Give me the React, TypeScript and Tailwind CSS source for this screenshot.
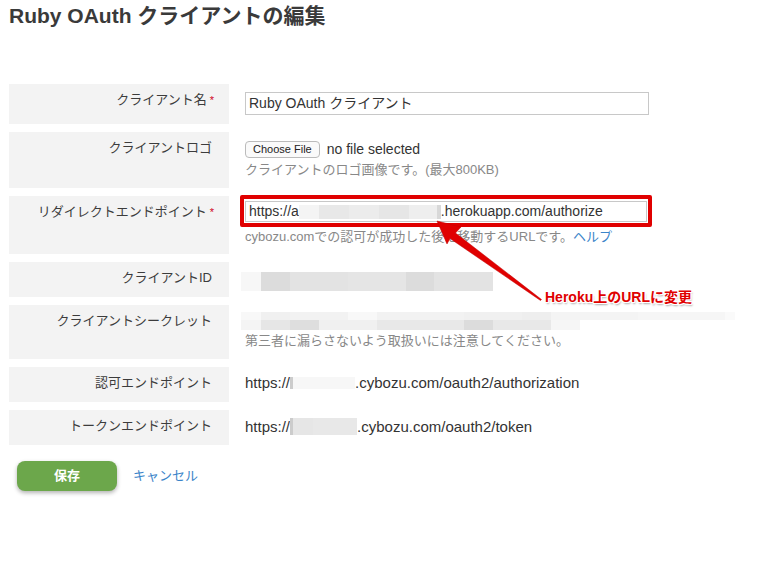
import React from "react";

const jp = "font-['Liberation_Sans','Noto_Sans_CJK_JP',sans-serif]";

function Blur({ cells, h }: { cells: [number, string][]; h: number }) {
  return (
    <span className="inline-flex align-middle">
      {cells.map(([w, c], i) => (
        <span key={i} style={{ width: w, height: h, background: c }} />
      ))}
    </span>
  );
}

function Row({
  label,
  required,
  h,
  children,
}: {
  label: string;
  required?: boolean;
  h: number;
  children?: React.ReactNode;
}) {
  return (
    <div className="flex" style={{ height: h }}>
      <div
        className={`w-[220px] shrink-0 bg-[#f3f3f3] pt-[8px] text-right text-[13px] leading-[16px] text-[#3c3c3c] ${
          required ? "pr-[15px]" : "pr-[17px]"
        }`}
      >
        {label}
        {required && <span className="ml-[3px] text-[11px] text-[#d0021b]">*</span>}
      </div>
      <div className="pl-4 flex-1 min-w-0">{children}</div>
    </div>
  );
}

export default function App() {
  return (
    <div className={`relative w-[767px] h-[582px] bg-white overflow-hidden ${jp}`}>
      <h1 className="pl-[9px] pt-[3px] text-[21px] font-bold leading-[26px] text-[#3a3a3a]">
        Ruby OAuth クライアントの編集
      </h1>

      <div className="mt-[55px] ml-[9px] flex flex-col gap-2">
        <Row label="クライアント名" required h={40}>
          <div className="mt-[8px] w-[404px] h-[23px] border border-[#c8c8c8] px-[3px] text-[14px] leading-[21px] text-[#333]">
            Ruby OAuth クライアント
          </div>
        </Row>

        <Row label="クライアントロゴ" h={56}>
          <div className="mt-[7px] flex items-center gap-[7px] text-[14px] text-[#333]">
            <span className="h-[17px] px-[7px] rounded-[4px] border border-[#bbb] bg-[#fafafa] text-[11px] leading-[15px] text-[#222]">
              Choose File
            </span>
            <span>no file selected</span>
          </div>
          <div className="mt-[1px] text-[13px] leading-[17px] text-[#888]">
            クライアントのロゴ画像です。(最大800KB)
          </div>
        </Row>

        <Row label="リダイレクトエンドポイント" required h={58}>
          <div className="-ml-[5px] -mt-[1px] w-[412px] h-[32px] border-[4px] border-[#e00000] rounded-[2px] pl-[1px] pt-[2px]">
            <div className="w-[402px] h-[21px] border border-[#c8c8c8] px-[3px] flex items-center text-[14px] text-[#333] whitespace-nowrap">
              <span>https://a</span>
              <Blur
                h={14}
                cells={[
                  [20, "#f4f4f4"],
                  [30, "#e8e8e8"],
                  [30, "#ececec"],
                  [30, "#e6e6e6"],
                  [28, "#eeeeee"],
                  [4, "#d8d8d8"],
                ]}
              />
              <span>.herokuapp.com/authorize</span>
            </div>
          </div>
          <div className="mt-[1px] text-[13px] leading-[17px] text-[#888] whitespace-nowrap">
            cybozu.comでの認可が成功した後に移動するURLです。
            <span className="text-[#3b84c9]">ヘルプ</span>
          </div>
        </Row>

        <Row label="クライアントID" h={35}>
          <div className="mt-[7px] -ml-[4px]">
            <Blur
              h={19}
              cells={[
                [20, "#f7f7f7"],
                [29, "#dcdcdc"],
                [58, "#e3e3e3"],
                [58, "#e5e5e5"],
                [28, "#dcdcdc"],
                [59, "#e3e3e3"],
              ]}
            />
          </div>
        </Row>

        <Row label="クライアントシークレット" h={54}>
          <div className="mt-[7px] -ml-[4px] flex flex-col">
            <Blur
              h={8}
              cells={[
                [20, "#f8f8f8"],
                [29, "#f0f0f0"],
                [58, "#f2f2f2"],
                [29, "#f8f8f8"],
                [87, "#f2f2f2"],
                [58, "#f0f0f0"],
                [29, "#eeeeee"],
                [87, "#f4f4f4"],
                [87, "#f6f6f6"],
                [10, "#fafafa"],
              ]}
            />
            <Blur
              h={10}
              cells={[
                [20, "#f4f4f4"],
                [29, "#e6e6e6"],
                [29, "#dedede"],
                [58, "#f0f0f0"],
                [87, "#e8e8e8"],
                [29, "#dcdcdc"],
                [58, "#e8e8e8"],
                [29, "#f6f6f6"],
              ]}
            />
          </div>
          <div className="mt-[2px] text-[13px] leading-[17px] text-[#888]">
            第三者に漏らさないよう取扱いには注意してください。
          </div>
        </Row>

        <Row label="認可エンドポイント" h={35}>
          <div className="mt-[8px] flex items-center text-[15px] leading-[16px] text-[#333] whitespace-nowrap">
            <span>https://</span>
            <Blur h={12} cells={[[3, "#cccccc"], [62, "#f7f7f7"]]} />
            <span>.cybozu.com/oauth2/authorization</span>
          </div>
        </Row>

        <Row label="トークンエンドポイント" h={35}>
          <div className="mt-[8px] flex items-center text-[15px] leading-[16px] text-[#333] whitespace-nowrap">
            <span>https://</span>
            <Blur h={17} cells={[[3, "#cccccc"], [20, "#e6e6e6"], [44, "#e8e8e8"]]} />
            <span>.cybozu.com/oauth2/token</span>
          </div>
        </Row>
      </div>

      <div className="mt-[16px] ml-[17px] flex items-center gap-[16px]">
        <button className="w-[100px] h-[30px] rounded-[8px] bg-[#6ca74b] text-white text-[13px] font-bold shadow-[0_2px_4px_rgba(0,0,0,0.3)]">
          保存
        </button>
        <span className="text-[13px] text-[#3b84c9]">キャンセル</span>
      </div>

      <svg
        className="absolute left-0 top-0 pointer-events-none"
        width="767"
        height="582"
      >
        <polygon
          points="437,221 461,227 455.5,233 541.5,299.5 540.5,300.5 450,238.5 447,244"
          fill="#e00000"
          stroke="#c00000"
          strokeWidth="0.5"
        />
      </svg>

      <div
        className="absolute left-[545px] top-[288px] text-[14px] font-bold leading-[18px] text-[#e00000]"
        style={{
          textShadow:
            "1px 0 0 #fff, -1px 0 0 #fff, 0 1px 0 #fff, 0 -1px 0 #fff, 1px 1px 0 #fff, -1px -1px 0 #fff, 1px -1px 0 #fff, -1px 1px 0 #fff, 1px 2px 2px rgba(0,0,0,0.35)",
        }}
      >
        Heroku上のURLに変更
      </div>
    </div>
  );
}
